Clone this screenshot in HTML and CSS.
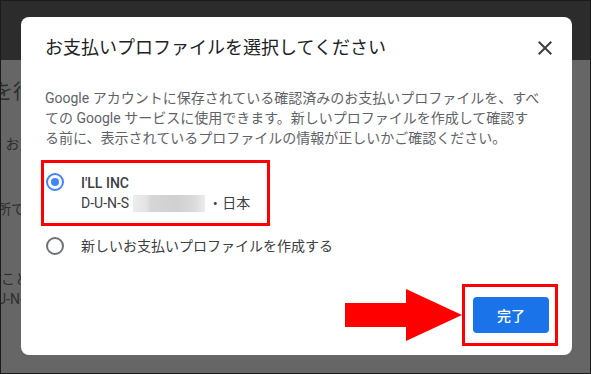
FILE: index.html
```html
<!DOCTYPE html>
<html lang="ja">
<head>
<meta charset="utf-8">
<title>お支払いプロファイルを選択</title>
<link rel="stylesheet" href="styles.css">
</head>
<body>
<div class="screen">
  <div class="page">
    <div class="page-bar"></div>
    <div class="page-body">
      <p class="bg-title">を行う</p>
      <p class="bg-line bg-l1">す。お支払い</p>
      <p class="bg-line bg-l2">所で使用</p>
      <p class="bg-line bg-l3">ことができます</p>
      <p class="bg-line bg-l4">U-N-S</p>
    </div>
  </div>

  <div class="dialog" role="dialog">
    <div class="dialog-head">
      <h1 class="dialog-title">お支払いプロファイルを選択してください</h1>
      <button class="close" aria-label="閉じる">
        <svg viewBox="0 0 24 24" width="24" height="24"><path d="M19 6.41L17.59 5 12 10.59 6.41 5 5 6.41 10.59 12 5 17.59 6.41 19 12 13.41 17.59 19 19 17.59 13.41 12z" fill="#3c4043"/></svg>
      </button>
    </div>
    <p class="desc">Google アカウントに保存されている確認済みのお支払いプロファイルを、すべ<br>ての Google サービスに使用できます。新しいプロファイルを作成して確認す<br>る前に、表示されているプロファイルの情報が正しいかご確認ください。</p>

    <div class="option option-selected">
      <span class="radio radio-on"></span>
      <div class="option-text">
        <div class="option-name">I'LL INC</div>
        <div class="option-sub">D-U-N-S <span class="blur"></span> ・日本</div>
      </div>
    </div>
    <div class="option option-new">
      <span class="radio"></span>
      <div class="option-text">
        <div class="option-plain">新しいお支払いプロファイルを作成する</div>
      </div>
    </div>

    <div class="dialog-foot">
      <svg class="arrow" width="117" height="52" viewBox="0 0 117 52"><polygon points="0,14 61,14 61,0 117,26 61,52 61,38 0,38" fill="#ff0000"/></svg>
      <div class="btn-frame">
        <button class="done">完了</button>
      </div>
    </div>
  </div>
</div>
</body>
</html>
```

FILE: styles.css
```css
* { box-sizing: border-box; }
html, body { margin: 0; padding: 0; background: #fff; }
body { font-family: Roboto, "Noto Sans CJK JP", sans-serif; }

.screen {
  position: relative;
  width: 591px;
  height: 374px;
  border: 1px solid #1b1b1b;
  background: #666666;
  overflow: hidden;
}

.page-bar { height: 59px; background: #2c2c2c; }
.page-body { width: 20px; overflow: hidden; color: #2e2e2e; }
.page-body p { margin: 0; white-space: nowrap; }
.bg-title { font-size: 20px; line-height: 24px; margin-top: 20px !important; margin-left: -8px !important; }
.bg-line { font-size: 14px; line-height: 20px; margin-left: -10px !important; }
.bg-l1 { margin-top: 30px !important; margin-left: -22px !important; }
.bg-l2 { margin-top: 45px !important; margin-left: -4px !important; }
.bg-l3 { margin-top: 50px !important; margin-left: 0 !important; }
.bg-l4 { margin-top: 0; margin-left: -4px !important; }

.dialog {
  position: absolute;
  left: 20px;
  top: 16px;
  width: 551px;
  height: 338px;
  background: #fff;
  border-radius: 8px;
  padding: 0 24px;
  display: flex;
  flex-direction: column;
}

.dialog-head {
  display: flex;
  align-items: center;
  justify-content: space-between;
  padding-top: 19px;
  margin-right: -9px;
}
.dialog-title {
  margin: 0;
  font-size: 18px;
  line-height: 24px;
  font-weight: 400;
  color: #202124;
}
.close {
  border: 0;
  background: none;
  padding: 0;
  width: 24px;
  height: 24px;
  display: flex;
}

.desc {
  margin: 28px 0 0;
  font-size: 14px;
  line-height: 20px;
  color: #5f6368;
  white-space: nowrap;
}

.option {
  display: flex;
  align-items: flex-start;
  gap: 17px;
  margin-left: -4px;
  border: 3px solid transparent;
  padding: 10px 20px 10px 2px;
  font-size: 14px;
  line-height: 20px;
  color: #3c4043;
}
.option-selected {
  margin-top: 12px;
  width: 229px;
  border-color: #ff0000;
}
.option-new { padding-top: 7px; }

.radio {
  flex: none;
  width: 18px;
  height: 18px;
  margin-top: 1px;
  border: 2px solid #6f7378;
  border-radius: 50%;
  display: flex;
  align-items: center;
  justify-content: center;
}
.radio-on { border-color: #4285f4; margin-top: 0; }
.radio-on::after {
  content: "";
  width: 8px;
  height: 8px;
  border-radius: 50%;
  background: #4285f4;
}

.option-name { font-weight: 500; color: #3c4043; }
.option-sub { white-space: nowrap; color: #3c4043; }
.blur {
  display: inline-block;
  width: 72px;
  height: 17px;
  vertical-align: -4px;
  background: linear-gradient(90deg, #ececec 0%, #e4e4e4 18%, #d6d6d6 25%, #d0d0d0 60%, #dadada 85%, #ececec 100%);
}
.option-plain { white-space: nowrap; }

.dialog-foot {
  margin-top: auto;
  display: flex;
  justify-content: flex-end;
  align-items: center;
  margin-right: -10px;
  padding-bottom: 9px;
}
.arrow { display: block; }
.btn-frame {
  border: 3px solid #ff0000;
  padding: 10px 6px 10px 8px;
}
.done {
  display: block;
  width: 76px;
  height: 36px;
  border: 0;
  border-radius: 4px;
  background: #1a73e8;
  color: #fff;
  font-family: Roboto, "Noto Sans CJK JP", sans-serif;
  font-size: 14px;
  font-weight: 500;
}
```
